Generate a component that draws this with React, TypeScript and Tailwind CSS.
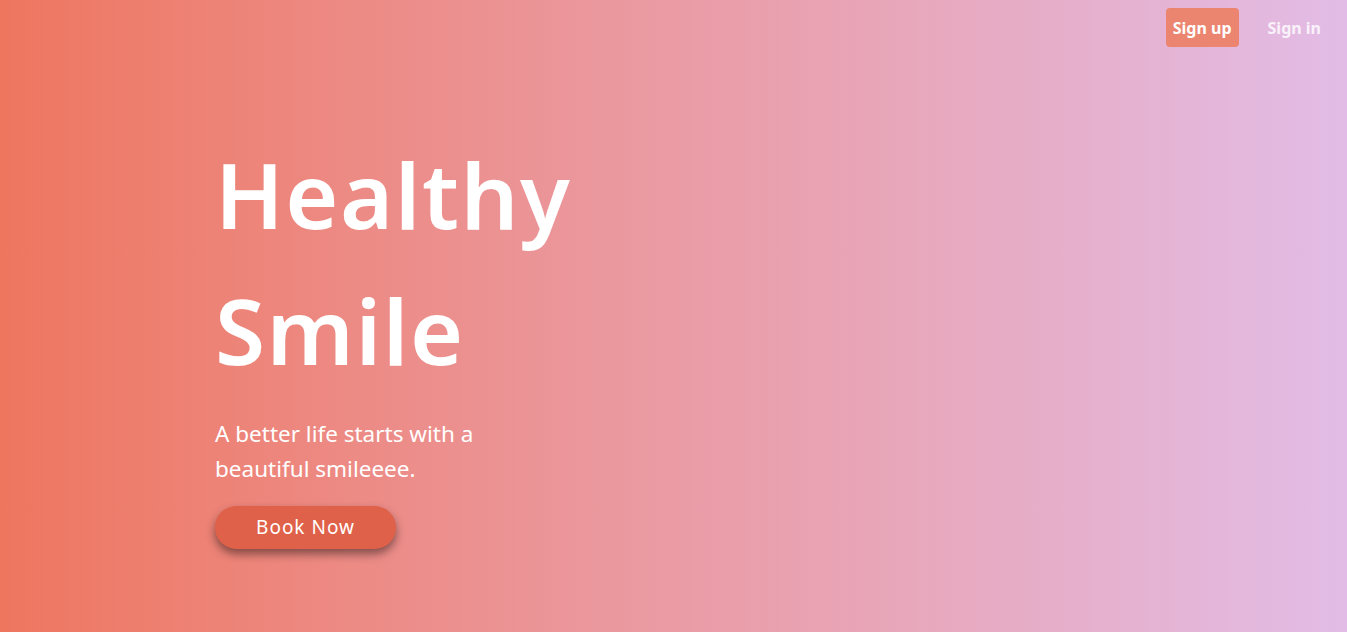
export default function App() {
  return (
    <div
      className="relative h-[632px] w-full overflow-hidden bg-gradient-to-r from-[#ee765f] to-[#e2bce6] text-white"
      style={{ fontFamily: '"Noto Sans", "Open Sans", sans-serif' }}
    >
      <nav className="flex justify-end gap-[13px] pr-[10px] pt-2">
        <button className="h-[39px] rounded-[4px] bg-[#ec8570] px-[7px] text-[16px] font-bold">Sign up</button>
        <button className="h-[39px] px-4 text-[16px] font-bold text-white/80">Sign in</button>
      </nav>

      <section className="pl-[215px] pt-[79px]">
        <h1 className="text-[91px] font-semibold leading-[136px] tracking-[1.5px]">
          Healthy
          <br />
          Smile
        </h1>
        <p className="mt-[18px] w-[300px] text-[22.5px] leading-[35px]">
          A better life starts with a beautiful smileeee.
        </p>
        <button className="mt-[20px] h-[43px] w-[181px] rounded-full bg-[#e06149] text-[19px] tracking-[1px] shadow-[0_5px_10px_rgba(0,0,0,0.45)]">
          Book Now
        </button>
      </section>
    </div>
  );
}
